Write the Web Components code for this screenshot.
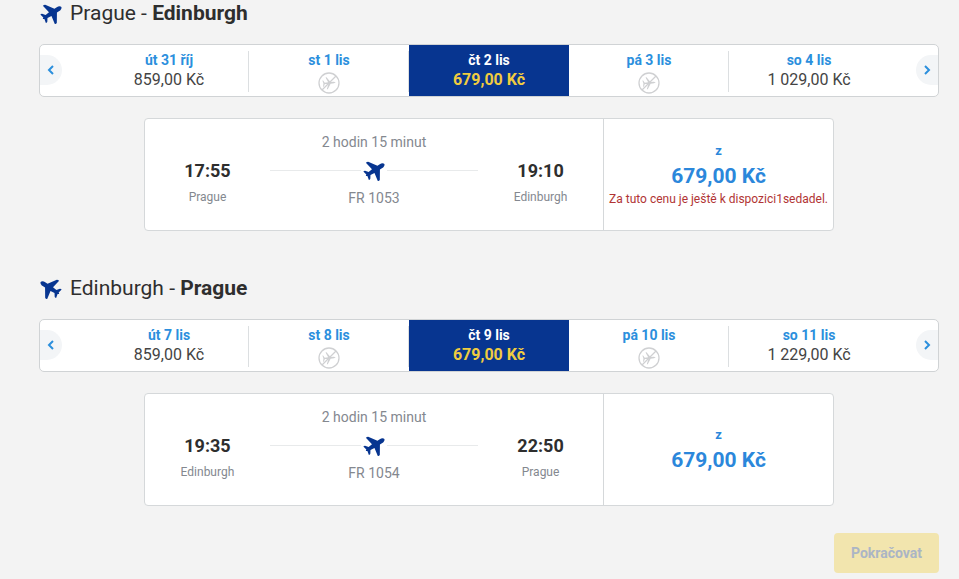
<!DOCTYPE html>
<html lang="cs">
<head>
<meta charset="utf-8">
<meta name="viewport" content="width=device-width, initial-scale=1">
<title>Prague - Edinburgh</title>
<style>
body { margin: 0; background: #f3f3f3; color: #2e2e2e; font-family: Roboto, "Liberation Sans", sans-serif; }
</style>
</head>
<body>
<flight-page></flight-page>

<template id="t-plane">
<style>
:host { display: inline-block; flex: none; width: 22px; height: 22px; color: #073590; }
:host([back]) svg { transform: scaleX(-1); }
svg { display: block; width: 100%; height: 100%; }
</style>
<svg viewBox="-11 -11 22 22" aria-hidden="true"><path transform="translate(1 0) rotate(57)" fill="currentColor" d="M0-11.200C1.500-10.800 2.300-9 2.300-7.200V-4.400L10.700 1.200Q11.300 1.800 11.100 3.700L2.300 2.100 1.700 6.500 4.800 8.700Q5.400 9.200 5.100 10.600L1 9.700 0 11-1 9.700-5.100 10.600Q-5.400 9.200-4.800 8.700L-1.700 6.500-2.300 2.100-11.100 3.700Q-11.300 1.800-10.700 1.200L-2.300-4.400V-7.200C-2.300-9-1.500-10.800 0-11.200Z"/></svg>
</template>

<template id="t-noflight">
<style>
:host { display: block; width: 22px; height: 22px; margin-top: 2px; }
svg { display: block; }
</style>
<svg width="22" height="22" viewBox="0 0 22 22" role="img" aria-label="Bez letu" fill="none" stroke="#cfd0d2"><circle cx="11" cy="11" r="10" stroke-width="1.300"/><path transform="translate(11 11) rotate(84) scale(.62)" fill="#cfd0d2" stroke="none" d="M0-11L1.300-8V-2.500L9.800 3 9.600 4.600 1.300 1.200 1 6.800 5 9 5.100 10.200 0 9-5.100 10.200-5 9-1 6.800-1.300 1.200-9.600 4.600-9.800 3-1.300-2.500V-8Z"/><path d="M4 18L18 4" stroke-width="1.200"/></svg>
</template>

<template id="t-title">
<style>
:host { display: block; }
h2 { display: flex; align-items: center; gap: 8px; margin: 0; padding-left: 1px; font-size: 21px; line-height: 26px; font-weight: 400; }
b { font-weight: 700; }
</style>
<h2><slot name="icon"></slot><span><slot name="from"></slot> - <b><slot name="to"></slot></b></span></h2>
</template>

<template id="t-day">
<style>
:host { display: block; flex: 0 1 160px; min-width: 0; }
button { display: flex; flex-direction: column; align-items: center; width: 100%; height: 100%; margin: 0; padding: 6px 0 0; border: 0; background: none; font: inherit; color: #444; cursor: pointer; position: relative; }
:host([divided]) button::after { content: ""; position: absolute; right: 0; top: 6px; bottom: 4px; width: 1px; background: #dcdfe1; }
strong { font-size: 14px; line-height: 19px; font-weight: 700; color: #2b8fdd; }
span { font-size: 16px; line-height: 20px; white-space: nowrap; }
button[aria-pressed="true"] { background: #073590; color: #f0cc40; font-weight: 700; }
button[aria-pressed="true"] strong { color: #fff; }
</style>
<button type="button"><strong></strong><span></span></button>
</template>

<template id="t-days">
<style>
:host { display: block; }
.strip { display: flex; justify-content: space-between; align-items: flex-start; border: 1px solid #d0d3d5; border-radius: 5px; background: #fff; overflow: hidden; }
.days { display: flex; flex: 0 1 800px; justify-content: center; height: 51px; }
.nav { flex: none; display: flex; align-items: center; justify-content: center; width: 22px; height: 30px; margin: 10px 0; padding: 0; border: 0; background: #f3f5f7; cursor: pointer; }
.prev { border-radius: 0 15px 15px 0; }
.next { border-radius: 15px 0 0 15px; }
svg { display: block; width: 10px; height: 12px; fill: none; stroke: #2b8fdd; stroke-width: 2; }
</style>
<div class="strip">
<button class="nav prev" type="button" aria-label="Předchozí"><svg viewBox="0 0 10 12"><path d="M7 2L3 6l4 4"/></svg></button>
<div class="days"><slot></slot></div>
<button class="nav next" type="button" aria-label="Další"><svg viewBox="0 0 10 12"><path d="M3 2l4 4-4 4"/></svg></button>
</div>
</template>

<template id="t-card">
<style>
:host { display: block; width: 100%; max-width: 690px; margin: 0 auto; }
article { box-sizing: border-box; display: grid; grid-template-columns: minmax(0, 1fr) 230px; min-height: 113px; border: 1px solid #d5d8da; border-radius: 4px; background: #fff; }
.route { display: grid; grid-template-columns: 3fr 5fr 3fr; text-align: center; padding: 12px 0; }
.stop { display: flex; flex-direction: column; gap: 4px; padding-top: 28px; }
time { font-size: 18px; line-height: 24px; font-weight: 700; color: #2e2e2e; }
.city { font-size: 12px; line-height: 20px; color: #84888f; }
.leg { font-size: 14px; line-height: 22px; color: #84888f; }
.line { display: flex; align-items: center; gap: 2px; height: 34px; }
.line::before, .line::after { content: ""; flex: 1; height: 1px; background: #e8eaeb; }
.price { display: flex; flex-direction: column; align-items: center; justify-content: center; padding-bottom: 2px; border-left: 1px solid #d5d8da; color: #2b87db; font-weight: 700; }
.z { font-size: 13px; line-height: 22px; }
.sum { font-size: 21px; line-height: 28px; }
.note { font-size: 12px; line-height: 18px; font-weight: 400; color: #b13434; white-space: nowrap; }
.note:empty { display: none; }
</style>
<article>
<div class="route">
<div class="stop"><time data-k="dep"></time><span class="city" data-k="from"></span></div>
<div class="leg"><div data-k="duration"></div><div class="line"><plane-icon></plane-icon></div><div data-k="number"></div></div>
<div class="stop"><time data-k="arr"></time><span class="city" data-k="to"></span></div>
</div>
<div class="price"><span class="z">z</span><span class="sum" data-k="price"></span><span class="note" data-k="note"></span></div>
</article>
</template>

<template id="t-submit">
<style>
:host { display: block; }
button { display: block; height: 40px; margin: 0; padding: 0 17px; border: 0; border-radius: 4px; background: #f2e5ae; color: #abb5c5; font: 700 14px/20px Roboto, "Liberation Sans", sans-serif; }
</style>
<button type="button" disabled><slot></slot></button>
</template>

<template id="t-page">
<style>
:host { display: block; }
main { padding: 0 20px 6px 39px; }
section { margin-bottom: 44px; }
section:last-of-type { margin-bottom: 27px; }
flight-days { margin: 18px 0 21px; }
footer { display: flex; justify-content: flex-end; }
</style>
<main>
<section>
<route-title><plane-icon slot="icon"></plane-icon><span slot="from">Prague</span><span slot="to">Edinburgh</span></route-title>
<flight-days>
<flight-day date="út 31 říj" price="859,00 Kč" divided></flight-day>
<flight-day date="st 1 lis" divided></flight-day>
<flight-day date="čt 2 lis" price="679,00 Kč" selected></flight-day>
<flight-day date="pá 3 lis" divided></flight-day>
<flight-day date="so 4 lis" price="1 029,00 Kč"></flight-day>
</flight-days>
<flight-card dep="17:55" from="Prague" arr="19:10" to="Edinburgh" duration="2 hodin 15 minut" number="FR 1053" price="679,00 Kč" note="Za tuto cenu je ještě k dispozici1sedadel."></flight-card>
</section>
<section>
<route-title><plane-icon back slot="icon"></plane-icon><span slot="from">Edinburgh</span><span slot="to">Prague</span></route-title>
<flight-days>
<flight-day date="út 7 lis" price="859,00 Kč" divided></flight-day>
<flight-day date="st 8 lis" divided></flight-day>
<flight-day date="čt 9 lis" price="679,00 Kč" selected></flight-day>
<flight-day date="pá 10 lis" divided></flight-day>
<flight-day date="so 11 lis" price="1 229,00 Kč"></flight-day>
</flight-days>
<flight-card dep="19:35" from="Edinburgh" arr="22:50" to="Prague" duration="2 hodin 15 minut" number="FR 1054" price="679,00 Kč"></flight-card>
</section>
<footer><submit-button>Pokračovat</submit-button></footer>
</main>
</template>

<script>
class Base extends HTMLElement {
  connectedCallback() {
    if (this.shadowRoot) return;
    this.attachShadow({ mode: "open" }).append(document.getElementById(this.constructor.template).content.cloneNode(true));
    this.fill(this.shadowRoot);
  }
  fill() {}
}
class PlaneIcon extends Base { static template = "t-plane"; }
class NoFlightIcon extends Base { static template = "t-noflight"; }
class RouteTitle extends Base { static template = "t-title"; }
class FlightDays extends Base { static template = "t-days"; }
class SubmitButton extends Base { static template = "t-submit"; }
class FlightDay extends Base {
  static template = "t-day";
  fill(root) {
    root.querySelector("strong").textContent = this.getAttribute("date");
    root.querySelector("button").setAttribute("aria-pressed", this.hasAttribute("selected"));
    const price = root.querySelector("span");
    if (this.hasAttribute("price")) price.textContent = this.getAttribute("price");
    else price.replaceWith(document.createElement("no-flight-icon"));
  }
}
class FlightCard extends Base {
  static template = "t-card";
  fill(root) {
    for (const el of root.querySelectorAll("[data-k]")) el.textContent = this.getAttribute(el.dataset.k) || "";
  }
}
class FlightPage extends Base { static template = "t-page"; }
customElements.define("plane-icon", PlaneIcon);
customElements.define("no-flight-icon", NoFlightIcon);
customElements.define("route-title", RouteTitle);
customElements.define("flight-days", FlightDays);
customElements.define("flight-day", FlightDay);
customElements.define("flight-card", FlightCard);
customElements.define("submit-button", SubmitButton);
customElements.define("flight-page", FlightPage);
</script>
</body>
</html>
